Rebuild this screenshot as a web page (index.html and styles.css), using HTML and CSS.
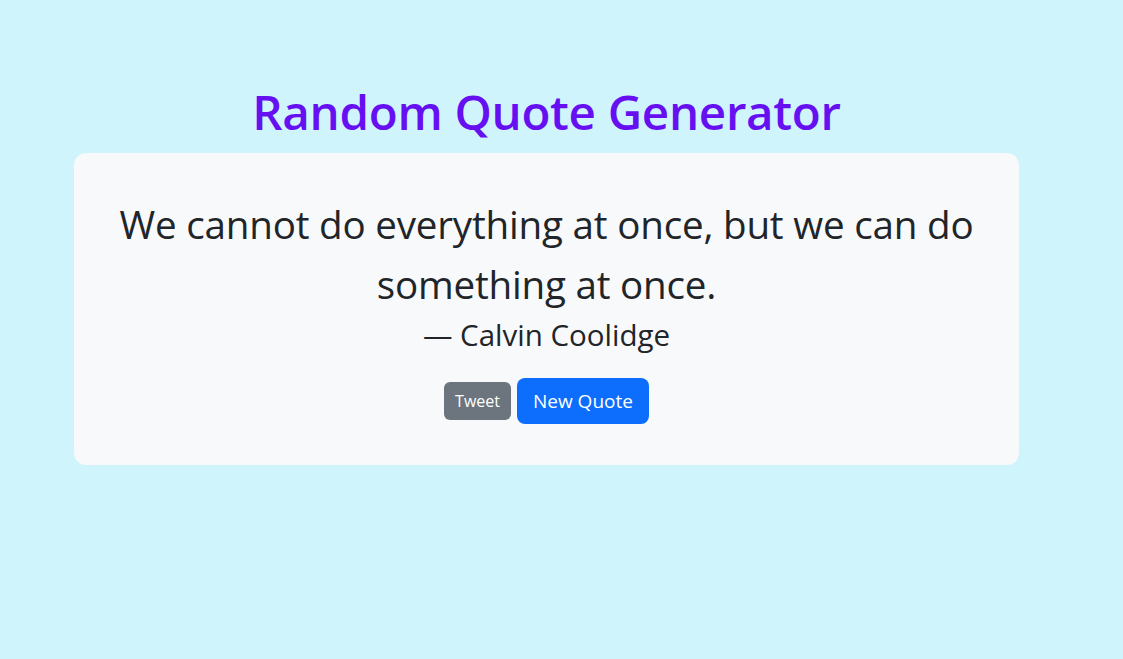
FILE: index.html
```html
<!DOCTYPE html>
<html lang="en">
<head>
<meta charset="utf-8">
<title>Random Quote Generator</title>
<link rel="stylesheet" href="styles.css">
</head>
<body>
<div class="page">
  <main class="main">
    <h1 class="title">Random Quote Generator</h1>
    <section class="card">
      <p class="quote">We cannot do everything at once, but we can do something at once.</p>
      <p class="author">— Calvin Coolidge</p>
      <div class="actions">
        <button class="btn btn-tweet" type="button">Tweet</button>
        <button class="btn btn-new" type="button">New Quote</button>
      </div>
    </section>
  </main>
</div>
</body>
</html>
```
FILE: styles.css
```css
html, body {
  margin: 0;
  padding: 0;
  height: 100%;
}
body {
  background: #cff4fc;
  font-family: "Open Sans", "Noto Sans", sans-serif;
  color: #212529;
}
.page {
  padding: 79px 0 0 74px;
}
.main {
  width: 945px;
  display: flex;
  flex-direction: column;
}
.title {
  margin: 0 0 9px;
  text-align: center;
  color: #6610f2;
  font-size: 47.5px;
  font-weight: 600;
  line-height: 65px;
  letter-spacing: -0.3px;
}
.card {
  background: #f8f9fa;
  border-radius: 12px;
  padding: 41px 40px 41px;
  display: flex;
  flex-direction: column;
  align-items: center;
  text-align: center;
}
.quote {
  margin: 0;
  font-size: 38.6px;
  line-height: 60px;
  letter-spacing: -0.2px;
}
.author {
  margin: 0 0 22px;
  font-size: 29.5px;
  line-height: 42px;
}
.actions {
  display: flex;
  align-items: center;
  gap: 6px;
}
.btn {
  border: 0;
  color: #fff;
  font-family: inherit;
  cursor: pointer;
}
.btn-tweet {
  background: #6c757d;
  font-size: 16px;
  line-height: 24px;
  padding: 7px 11px;
  border-radius: 6px;
  height: 38px;
}
.btn-new {
  background: #0d6efd;
  font-size: 19px;
  line-height: 30px;
  padding: 8px 16px;
  border-radius: 8px;
  height: 46px;
}
```
